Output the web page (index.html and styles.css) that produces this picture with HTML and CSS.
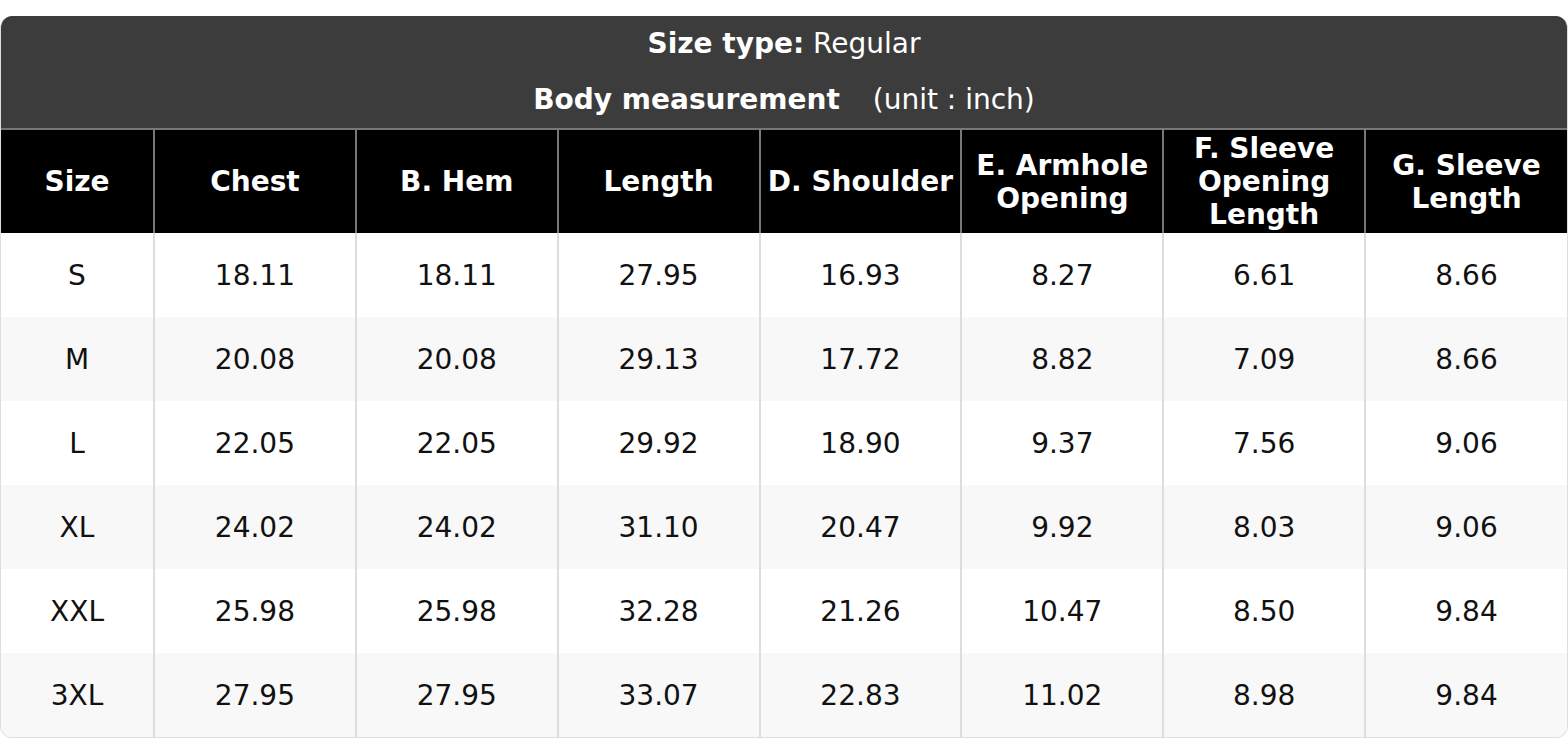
FILE: index.html
```html
<!DOCTYPE html>
<html>
<head>
<meta charset="utf-8">
<link rel="stylesheet" href="styles.css">
</head>
<body>
<div class="card">
  <div class="title">
    <div class="line"><b>Size type:</b> Regular</div>
    <div class="line"><b>Body measurement</b><span class="unit">(unit : inch)</span></div>
  </div>
  <table class="sizes">
    <colgroup>
      <col class="c-size"><col><col><col><col><col><col><col>
    </colgroup>
    <thead>
      <tr>
        <th>Size</th><th>Chest</th><th>B. Hem</th><th>Length</th><th>D. Shoulder</th><th>E. Armhole Opening</th><th>F. Sleeve Opening Length</th><th>G. Sleeve Length</th>
      </tr>
    </thead>
    <tbody>
      <tr><td>S</td><td>18.11</td><td>18.11</td><td>27.95</td><td>16.93</td><td>8.27</td><td>6.61</td><td>8.66</td></tr>
      <tr><td>M</td><td>20.08</td><td>20.08</td><td>29.13</td><td>17.72</td><td>8.82</td><td>7.09</td><td>8.66</td></tr>
      <tr><td>L</td><td>22.05</td><td>22.05</td><td>29.92</td><td>18.90</td><td>9.37</td><td>7.56</td><td>9.06</td></tr>
      <tr><td>XL</td><td>24.02</td><td>24.02</td><td>31.10</td><td>20.47</td><td>9.92</td><td>8.03</td><td>9.06</td></tr>
      <tr><td>XXL</td><td>25.98</td><td>25.98</td><td>32.28</td><td>21.26</td><td>10.47</td><td>8.50</td><td>9.84</td></tr>
      <tr><td>3XL</td><td>27.95</td><td>27.95</td><td>33.07</td><td>22.83</td><td>11.02</td><td>8.98</td><td>9.84</td></tr>
    </tbody>
  </table>
</div>
</body>
</html>
```
FILE: styles.css
```css
html, body {
  margin: 0;
  padding: 0;
  background: #ffffff;
}
body {
  padding-top: 16px;
  font-family: "DejaVu Sans", Verdana, sans-serif;
  font-size: 28px;
  color: #111111;
}
.card {
  width: 1568px;
  box-sizing: border-box;
  border: 1px solid #dddddd;
  border-top: none;
  border-radius: 12px;
  overflow: hidden;
  background: #ffffff;
}
.title {
  background: #3c3c3c;
  color: #ffffff;
  text-align: center;
}
.title .line {
  height: 56px;
  line-height: 56px;
}
.title .unit {
  margin-left: 33px;
}
.sizes {
  width: 100%;
  border-collapse: collapse;
  table-layout: fixed;
}
.c-size {
  width: 153px;
}
.sizes th {
  background: #000000;
  color: #ffffff;
  font-weight: bold;
  height: 103px;
  padding: 0 4px;
  line-height: 33px;
  border: 2px solid #777777;
  border-bottom: none;
  text-align: center;
  vertical-align: middle;
}
.sizes th:first-child,
.sizes td:first-child {
  border-left: none;
}
.sizes th:last-child,
.sizes td:last-child {
  border-right: none;
}
.sizes td {
  height: 84px;
  padding: 0;
  text-align: center;
  vertical-align: middle;
  border-left: 2px solid #dddddd;
  border-right: 2px solid #dddddd;
}
.sizes tbody tr:nth-child(even) td {
  background: #f8f8f8;
}
```
